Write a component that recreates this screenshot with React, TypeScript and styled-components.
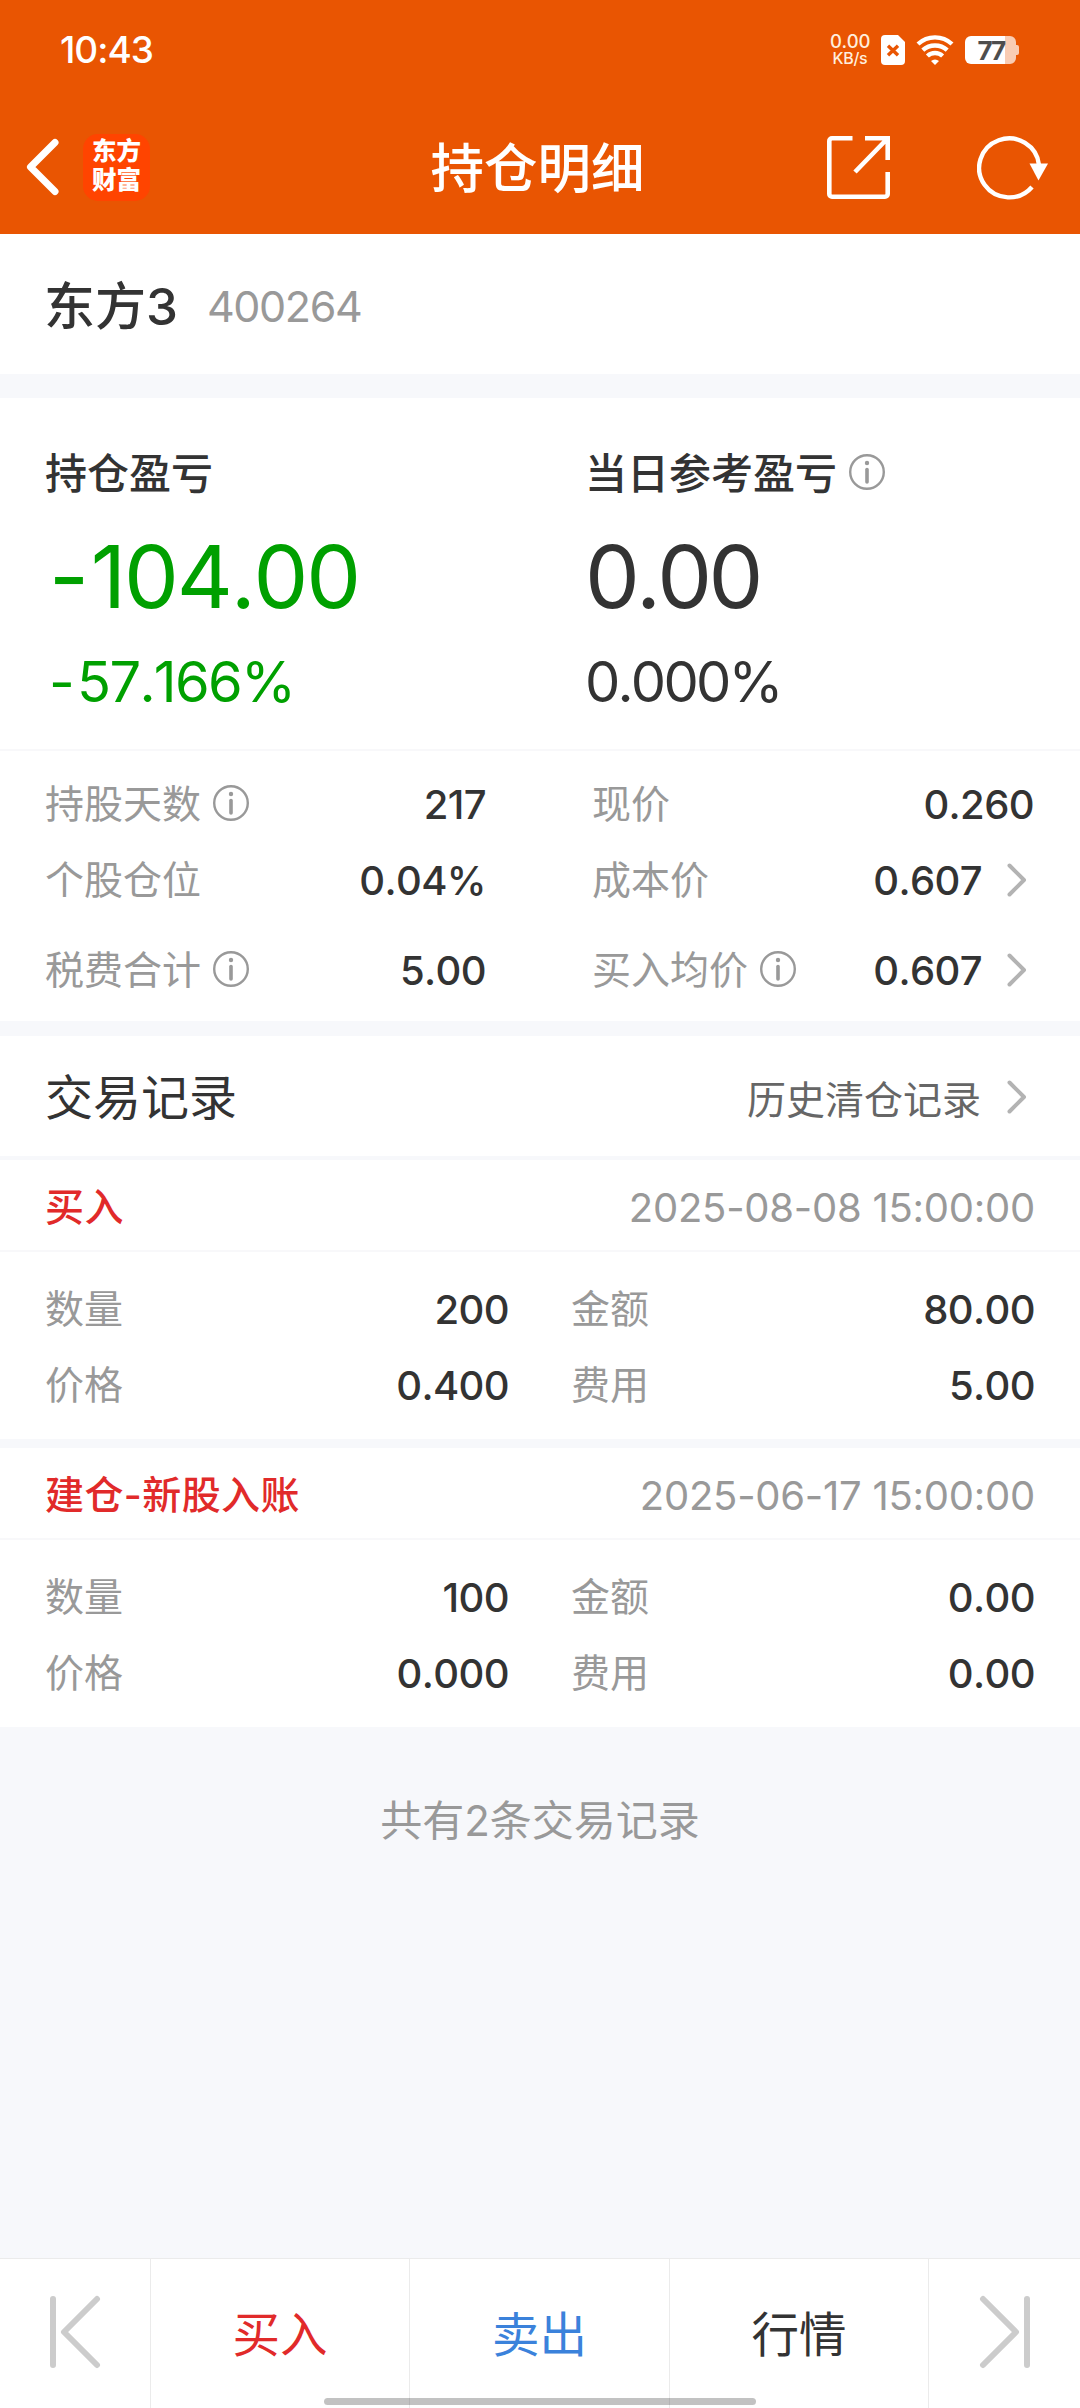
import React from "react";
import styled, { createGlobalStyle } from "styled-components";

const GlobalStyle = createGlobalStyle`
  *, *::before, *::after { box-sizing: border-box; }
  body {
    margin: 0;
    background: #f7f8fb;
    color: #333;
    font-family: Inter, "Noto Sans CJK SC", sans-serif;
    font-kerning: none;
  }
`;

const Page = styled.div`
  position: relative;
  width: 1080px;
  height: 2408px;
  display: flex;
  flex-direction: column;
  background: #f7f8fb;
  overflow: hidden;
`;

const Header = styled.header`
  height: 234px;
  flex: none;
  background: #e95502;
  color: #fff;
  display: flex;
  flex-direction: column;
`;

const StatusBar = styled.div`
  height: 100px;
  padding: 0 61px 0 60px;
  display: flex;
  align-items: center;
  justify-content: space-between;
`;

const Clock = styled.span`
  font-size: 37px;
  font-weight: 500;
  letter-spacing: -1px;
  line-height: 44px;
`;

const StatusIcons = styled.div`
  display: flex;
  align-items: center;
`;

const NetSpeed = styled.div`
  display: flex;
  flex-direction: column;
  align-items: center;
  width: 40px;
  margin-right: 11px;
  font-weight: 500;
  color: #ffeedd;
`;

const SpeedLine = styled.span<{ $size: number }>`
  font-size: ${(p) => p.$size}px;
  line-height: 17px;
  letter-spacing: -0.3px;
`;

const WifiIcon = styled.svg`
  margin-left: 11px;
`;

const Battery = styled.div`
  position: relative;
  width: 54px;
  height: 28px;
  margin-left: 11px;
`;

const BatteryText = styled.span`
  position: absolute;
  left: 0;
  top: 1px;
  width: 52px;
  text-align: center;
  color: #4d4d4d;
  font-size: 26px;
  font-weight: 700;
  line-height: 27px;
  letter-spacing: -1.6px;
`;

const NavBar = styled.div`
  height: 134px;
  display: grid;
  grid-template-columns: 1fr auto 1fr;
  align-items: center;
  padding: 0 31px 0 26px;
`;

const NavLeft = styled.div`
  display: flex;
  align-items: center;
  gap: 23px;
`;

const NavRight = styled.div`
  display: flex;
  align-items: center;
  justify-content: flex-end;
  gap: 87px;
`;

const NavTitle = styled.h1`
  margin: 0;
  padding-top: 4px;
  font-size: 53.5px;
  line-height: 70px;
  font-weight: 500;
`;

const Logo = styled.div`
  width: 67px;
  height: 67px;
  border-radius: 15px;
  background: #ff4400;
  display: flex;
  flex-direction: column;
  align-items: center;
  justify-content: center;
  padding: 0 0 2px 0;
  font-size: 24.5px;
  line-height: 29px;
  font-weight: 900;
`;

const StockRow = styled.section`
  height: 140px;
  flex: none;
  background: #fff;
  display: flex;
  align-items: center;
  padding: 4px 44px 0;
  gap: 29px;
`;

const StockName = styled.span`
  font-size: 51px;
  font-weight: 500;
  line-height: 60px;
  padding-top: 2px;
`;

const StockCode = styled.span`
  font-size: 43px;
  color: #999;
  line-height: 60px;
  letter-spacing: -1.4px;
`;

const Gap = styled.div<{ $h: number }>`
  height: ${(p) => p.$h}px;
  flex: none;
`;

const Summary = styled.section`
  height: 353px;
  flex: none;
  background: #fff;
  border-bottom: 2px solid #f8f8fa;
  display: grid;
  grid-template-columns: 540px 1fr;
  padding: 42px 0 0 45px;
`;

const SummaryCol = styled.div<{ $color: string }>`
  display: flex;
  flex-direction: column;
  color: ${(p) => p.$color};
`;

const InfoSvg = styled.svg`
  margin-top: 3px;
`;

const SummaryLabel = styled.div`
  display: flex;
  align-items: center;
  gap: 12px;
  height: 60px;
  color: #333;
  font-size: 42px;
  font-weight: 500;
`;

const Amount = styled.div<{ $spacing: number }>`
  margin-top: 25px;
  height: 104px;
  line-height: 104px;
  font-size: 87px;
  letter-spacing: ${(p) => p.$spacing}px;
`;

const Percent = styled.div<{ $spacing: number }>`
  margin-top: 18px;
  height: 70px;
  line-height: 70px;
  font-size: 56px;
  letter-spacing: ${(p) => p.$spacing}px;
`;

const Sign = styled.span`
  margin-left: 4px;
  margin-right: 4px;
`;

const Details = styled.section`
  height: 270px;
  flex: none;
  background: #fff;
  display: grid;
  grid-template-columns: 441px 442px;
  grid-template-rows: 76px 76px 104px;
  column-gap: 106px;
  padding: 15px 45px 0;
`;

const Field = styled.div`
  display: flex;
  align-items: center;
  justify-content: space-between;
`;

const FieldLabel = styled.span`
  display: flex;
  align-items: center;
  gap: 12px;
  padding-bottom: 6px;
  color: #999;
  font-size: 39px;
`;

const FieldValue = styled.span<{ $link?: boolean }>`
  display: flex;
  align-items: center;
  gap: 25px;
  margin-right: ${(p) => (p.$link ? 7 : 0)}px;
  color: #333;
  font-size: 40px;
  font-weight: 500;
  letter-spacing: -0.6px;
`;

const RecordsHead = styled.section`
  height: 120px;
  flex: none;
  background: #fff;
  display: flex;
  align-items: center;
  justify-content: space-between;
  padding: 3px 53px 0 45px;
`;

const RecordsTitle = styled.h2`
  margin: 0;
  padding-bottom: 7px;
  font-size: 48px;
  font-weight: 400;
`;

const HistoryLink = styled.a`
  display: flex;
  align-items: center;
  gap: 26px;
  padding-bottom: 1px;
  color: #666;
  font-size: 39px;
`;

const Record = styled.article`
  height: 279px;
  flex: none;
  background: #fff;
`;

const RecordHead = styled.div`
  height: 92px;
  border-bottom: 2px solid #f8f8fa;
  display: flex;
  align-items: center;
  justify-content: space-between;
  padding: 4px 45px 0;
`;

const RecordType = styled.span`
  padding-bottom: 6px;
  color: #e12a2a;
  font-size: 39px;
  font-weight: 500;
  letter-spacing: 0.4px;
`;

const RecordTime = styled.span`
  color: #999;
  font-size: 40px;
  letter-spacing: -0.25px;
`;

const RecordGrid = styled.div`
  display: grid;
  grid-template-columns: 464px 464px;
  grid-auto-rows: 76px;
  column-gap: 62px;
  padding: 19px 45px 0;
`;

const Total = styled.p`
  margin: 0;
  padding-top: 63px;
  flex: 1;
  text-align: center;
  color: #999;
  font-size: 42px;
  line-height: 62px;
`;

const TabBar = styled.nav`
  height: 150px;
  flex: none;
  background: #fff;
  border-top: 1px solid #ebebeb;
  display: grid;
  grid-template-columns: 151px 259px 260px 259px 151px;
`;

const Tab = styled.button<{ $color?: string }>`
  border: 0;
  border-right: 1px solid #ebebeb;
  background: none;
  margin: 0;
  padding: 0 0 4px;
  display: flex;
  align-items: center;
  justify-content: center;
  font: inherit;
  font-size: 47.5px;
  color: ${(p) => p.$color || "#333"};
  &:last-child { border-right: 0; }
`;

const HomeIndicator = styled.div`
  position: absolute;
  left: 324px;
  bottom: 3px;
  width: 432px;
  height: 7px;
  border-radius: 4px;
  background: rgba(0, 0, 0, 0.24);
`;

const InfoIcon = () => (
  <InfoSvg width="36" height="36" viewBox="0 0 36 36" fill="none" stroke="#999">
    <circle cx="18" cy="18" r="16.8" strokeWidth="2.4" />
    <path d="M18 15.5v12.5" strokeWidth="3.6" strokeLinecap="round" />
    <circle cx="18" cy="9" r="2.2" fill="#999" stroke="none" />
  </InfoSvg>
);

const Chevron = () => (
  <svg width="20" height="34" viewBox="0 0 20 34" fill="none" stroke="#b3b3b3" strokeWidth="4" strokeLinecap="round" strokeLinejoin="round">
    <path d="M2.5 2.5 17 17 2.5 31.5" />
  </svg>
);

type FieldProps = { label: string; value: string; info?: boolean; link?: boolean };

const DataField = ({ label, value, info, link }: FieldProps) => (
  <Field>
    <FieldLabel>
      {label}
      {info && <InfoIcon />}
    </FieldLabel>
    <FieldValue $link={link}>
      {value}
      {link && <Chevron />}
    </FieldValue>
  </Field>
);

const details: FieldProps[] = [
  { label: "持股天数", value: "217", info: true },
  { label: "现价", value: "0.260" },
  { label: "个股仓位", value: "0.04%" },
  { label: "成本价", value: "0.607", link: true },
  { label: "税费合计", value: "5.00", info: true },
  { label: "买入均价", value: "0.607", info: true, link: true },
];

const records = [
  { type: "买入", time: "2025-08-08 15:00:00", qty: "200", amount: "80.00", price: "0.400", fee: "5.00" },
  { type: "建仓-新股入账", time: "2025-06-17 15:00:00", qty: "100", amount: "0.00", price: "0.000", fee: "0.00" },
];

export default function App() {
  return (
    <Page>
      <GlobalStyle />
      <Header>
        <StatusBar>
          <Clock>10:43</Clock>
          <StatusIcons>
            <NetSpeed>
              <SpeedLine $size={18.5}>0.00</SpeedLine>
              <SpeedLine $size={16}>KB/s</SpeedLine>
            </NetSpeed>
            <svg width="24" height="30" viewBox="0 0 24 30">
              <path d="M4 0h13l7 7v19a4 4 0 0 1-4 4H4a4 4 0 0 1-4-4V4a4 4 0 0 1 4-4z" fill="#fff" />
              <path d="M7 10.8l10 9.4M17 10.8l-10 9.4" stroke="#e95502" strokeWidth="3.4" />
            </svg>
            <WifiIcon width="38" height="30" viewBox="0 0 38 30" fill="none" stroke="#fff" strokeWidth="4.4">
              <path d="M2 9a25 25 0 0 1 34 0" />
              <path d="M6.8 15.2a18 18 0 0 1 24.4 0" />
              <path d="M11.4 21a11.2 11.2 0 0 1 15.2 0" />
              <path d="M15 26a6 6 0 0 1 8 0L19 30z" fill="#fff" stroke="none" />
            </WifiIcon>
            <Battery>
              <svg width="54" height="28" viewBox="0 0 54 28">
                <path d="M40 0h5a6 6 0 0 1 6 6v3h1a2 2 0 0 1 2 2v6a2 2 0 0 1-2 2h-1v3a6 6 0 0 1-6 6h-5z" fill="#f9ccb3" />
                <path d="M6 0h34v28H6a6 6 0 0 1-6-6V6a6 6 0 0 1 6-6z" fill="#fff" />
              </svg>
              <BatteryText>77</BatteryText>
            </Battery>
          </StatusIcons>
        </StatusBar>
        <NavBar>
          <NavLeft>
            <svg width="34" height="58" viewBox="0 0 34 58" fill="none" stroke="#fff" strokeWidth="7" strokeLinecap="round" strokeLinejoin="round">
              <path d="M29 4.5 4.5 29 29 53.5" />
            </svg>
            <Logo>
              <span>东方</span>
              <span>财富</span>
            </Logo>
          </NavLeft>
          <NavTitle>持仓明细</NavTitle>
          <NavRight>
            <svg width="63" height="63" viewBox="0 0 63 63" fill="none" stroke="#fff" strokeWidth="4.6">
              <path d="M25.5 2.3H5A2.7 2.7 0 0 0 2.3 5v53A2.7 2.7 0 0 0 5 60.7h53a2.7 2.7 0 0 0 2.7-2.7V36" />
              <path d="M38 2.3h22.7V24M60 3 28 36" />
            </svg>
            <svg width="72" height="66" viewBox="0 0 72 66" fill="none">
              <path d="M55 53A30 29.5 0 1 1 62 31" stroke="#fff" strokeWidth="4.4" />
              <path d="M52.5 29.5H71L61.5 46.5z" fill="#fff" />
            </svg>
          </NavRight>
        </NavBar>
      </Header>

      <StockRow>
        <StockName>东方3</StockName>
        <StockCode>400264</StockCode>
      </StockRow>
      <Gap $h={24} />

      <Summary>
        <SummaryCol $color="#00a000">
          <SummaryLabel>持仓盈亏</SummaryLabel>
          <Amount $spacing={-2.2}>
            <Sign>-</Sign>104.00
          </Amount>
          <Percent $spacing={-1.7}>
            <Sign>-</Sign>57.166%
          </Percent>
        </SummaryCol>
        <SummaryCol $color="#333">
          <SummaryLabel>
            当日参考盈亏
            <InfoIcon />
          </SummaryLabel>
          <Amount $spacing={-3.8}>0.00</Amount>
          <Percent $spacing={-2.8}>0.000%</Percent>
        </SummaryCol>
      </Summary>

      <Details>
        {details.map((d) => (
          <DataField key={d.label} {...d} />
        ))}
      </Details>
      <Gap $h={15} />

      <RecordsHead>
        <RecordsTitle>交易记录</RecordsTitle>
        <HistoryLink>
          历史清仓记录
          <Chevron />
        </HistoryLink>
      </RecordsHead>
      <Gap $h={4} />

      {records.map((r, i) => (
        <React.Fragment key={r.time}>
          {i > 0 && <Gap $h={9} />}
          <Record>
            <RecordHead>
              <RecordType>{r.type}</RecordType>
              <RecordTime>{r.time}</RecordTime>
            </RecordHead>
            <RecordGrid>
              <DataField label="数量" value={r.qty} />
              <DataField label="金额" value={r.amount} />
              <DataField label="价格" value={r.price} />
              <DataField label="费用" value={r.fee} />
            </RecordGrid>
          </Record>
        </React.Fragment>
      ))}

      <Total>共有2条交易记录</Total>

      <TabBar>
        <Tab>
          <svg width="52" height="74" viewBox="0 0 52 74" fill="none" stroke="#ccc" strokeWidth="6" strokeLinecap="round" strokeLinejoin="round">
            <path d="M4 4v66M48 4 15 37l33 33" />
          </svg>
        </Tab>
        <Tab $color="#e12a2a">买入</Tab>
        <Tab $color="#3b82db">卖出</Tab>
        <Tab>行情</Tab>
        <Tab>
          <svg width="52" height="74" viewBox="0 0 52 74" fill="none" stroke="#ccc" strokeWidth="6" strokeLinecap="round" strokeLinejoin="round">
            <path d="M48 4v66M4 4l33 33L4 70" />
          </svg>
        </Tab>
      </TabBar>
      <HomeIndicator />
    </Page>
  );
}
